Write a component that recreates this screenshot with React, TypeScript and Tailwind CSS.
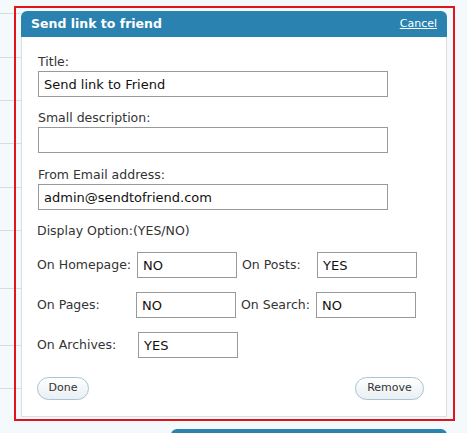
import React from "react";

const font = { fontFamily: '"DejaVu Sans", Verdana, sans-serif' };

const rules = [13, 57, 100, 143, 187, 230, 288, 345, 388];

function Field({ label, value, className = "" }: { label: string; value: string; className?: string }) {
  return (
    <div className={`flex flex-col ${className}`}>
      <label className="h-[18px] leading-[18px] text-[12.5px] text-[#333]">{label}</label>
      <input
        readOnly
        value={value}
        className="h-[26px] w-[350px] border border-[#999] bg-white px-[5px] text-[13px] text-[#111] outline-none"
        style={font}
      />
    </div>
  );
}

function Opt({ label, value, w }: { label: string; value: string; w: string }) {
  return (
    <div className="flex items-center">
      <span className={`${w} text-[12.5px] text-[#333]`}>{label}</span>
      <input
        readOnly
        value={value}
        className="h-[26px] w-[100px] border border-[#999] bg-white px-[5px] text-[13px] text-[#111] outline-none"
        style={font}
      />
    </div>
  );
}

export default function App() {
  return (
    <div className="relative h-[433px] w-[467px] overflow-hidden bg-[#f4fafc]" style={font}>
      {/* rows of the page behind the dialog */}
      <div className="absolute left-0 top-0 w-[21px]">
        {rules.map((y) => (
          <div key={y} className="absolute left-0 h-px w-[21px] bg-[#d6dde1]" style={{ top: y }} />
        ))}
      </div>

      <div className="relative ml-[14px] mt-[6px] h-[415px] w-[441px] border-2 border-[#e3131b] pb-[2px] pl-[5px] pr-[6px] pt-[3px]">
        <div className="flex h-full flex-col">
          <div className="flex h-[26px] items-center justify-between rounded-t-[6px] bg-[#2982b0] pl-[10px] pr-[10px]">
            <span className="text-[12.5px] font-bold text-white">Send link to friend</span>
            <a href="#" className="text-[11px] text-white underline">Cancel</a>
          </div>
          <div className="flex flex-1 flex-col border-x border-b border-[#dcdfe2] bg-white pl-[15px] pt-[16px]">
            <Field label="Title:" value="Send link to Friend" className="pl-px" />
            <Field label="Small description:" value="" className="mt-[12px] pl-px" />
            <Field label="From Email address:" value="admin@sendtofriend.com" className="mt-[13px] pl-px" />
            <div className="mt-[12px] h-[18px] leading-[18px] text-[12.5px] text-[#333]">Display Option:(YES/NO)</div>
            <div className="mt-[12px] flex flex-col gap-[14px]">
              <div className="flex">
                <Opt label="On Homepage:" value="NO" w="w-[100px]" />
                <div className="ml-[5px]">
                  <Opt label="On Posts:" value="YES" w="w-[75px]" />
                </div>
              </div>
              <div className="flex">
                <Opt label="On Pages:" value="NO" w="w-[99px]" />
                <div className="ml-[5px]">
                  <Opt label="On Search:" value="NO" w="w-[75px]" />
                </div>
              </div>
              <div className="flex">
                <Opt label="On Archives:" value="YES" w="w-[101px]" />
              </div>
            </div>
            <div className="mt-[19px] flex w-[387px] justify-between">
              <button className="h-[23px] w-[52px] rounded-full border border-[#a9c3d3] bg-gradient-to-b from-white to-[#e9eff3] text-[11px] text-[#333]">
                Done
              </button>
              <button className="h-[23px] w-[69px] rounded-full border border-[#a9c3d3] bg-gradient-to-b from-white to-[#e9eff3] text-[11px] text-[#333]">
                Remove
              </button>
            </div>
          </div>
        </div>
      </div>

      <div className="ml-[171px] mt-[8px] h-[10px] w-[276px] rounded-t-[6px] bg-[#2982b0]" />
    </div>
  );
}
